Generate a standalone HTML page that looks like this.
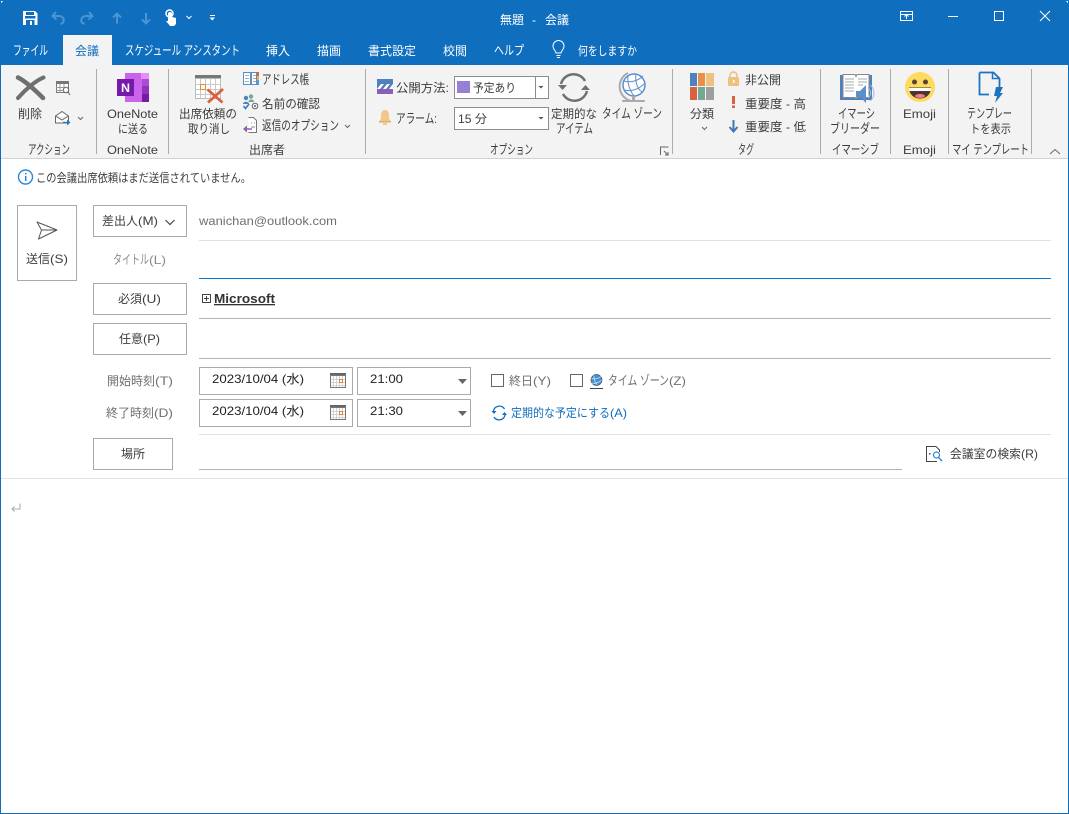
<!DOCTYPE html>
<html lang="ja"><head><meta charset="utf-8"><title>無題 - 会議</title>
<style>
html,body{margin:0;padding:0;background:#fff;width:1069px;height:814px;overflow:hidden}
svg{display:block}
text{font-family:"Liberation Sans","Noto Sans CJK JP",sans-serif;font-size:12px;fill:#3c3c3c;white-space:pre}
.w{fill:#fff}
.g{fill:#6f6f6f}
.k{font-size:13px}
.d{fill:#222}
</style></head><body>
<svg width="1069" height="814" viewBox="0 0 1069 814" xmlns="http://www.w3.org/2000/svg">
<!-- window -->
<rect x="0.5" y="0.5" width="1068" height="813" fill="#fff" stroke="#106ebe"/>
<path d="M0 8Q0 0 8 0H1061Q1069 0 1069 8V65H0Z" fill="#106ebe"/>
<rect x="1" y="65" width="1067" height="93" fill="#f3f3f3"/>
<rect x="1" y="158" width="1067" height="1" fill="#d2d2d2"/>
<rect x="63" y="35" width="49" height="30" fill="#f3f3f3"/>

<!-- QAT -->
<path d="M23 11h12l2.500 2.500V25H23Z" fill="#fff"/><rect x="25" y="16" width="10.500" height="2.500" fill="#106ebe"/><rect x="26" y="12" width="8" height="3" fill="#106ebe"/><rect x="26" y="20" width="8.500" height="5" fill="#106ebe"/><rect x="30" y="21" width="2" height="4" fill="#fff"/>
<g fill="none" stroke="#4d95d2" stroke-width="2">
<path d="M56 12l-3.500 4 4 3.500M53 16h6c5.500 0 6.500 7 1.500 8"/>
<path d="M89 12l3.500 4-4 3.500M92 16h-6c-5.500 0-6.500 7-1.500 8"/>
<path d="M117 23.500V13.500M113 17.500l4-4 4 4"/>
<path d="M146 13v10M142 19.500l4 4 4-4"/>
</g>
<path d="M168 21v-8a2.500 2.500 0 0 1 4 0v4l4 1v6l-2 2h-4l-4-5Z" fill="#fff"/><circle cx="169.500" cy="13.500" r="3.500" fill="none" stroke="#fff" stroke-width="1.500"/>
<path d="M186.500 16l2.500 2.500 2.500-2.500M210 15.500h5" fill="none" stroke="#fff"/>
<path d="M209.500 17.500h5.500l-2.750 3Z" fill="#fff"/>

<!-- window buttons -->
<g fill="none" stroke="#fff">
<rect x="900.500" y="11.500" width="12" height="9"/><path d="M900 14.500h13M906.500 19v-4M904.500 16.500l2-2 2 2"/>
<path d="M948 16.500h10"/>
<rect x="994.500" y="11.500" width="9" height="9"/>
<path d="M1040 11l10 10M1050 11l-10 10"/>
</g>

<text class="w" x="500" y="24" textLength="24" lengthAdjust="spacingAndGlyphs">無題</text>
<text class="w" x="532" y="24">-</text>
<text class="w" x="545" y="24" textLength="24" lengthAdjust="spacingAndGlyphs">会議</text>
<!-- tabs -->
<text class="w k" x="13" y="55" textLength="35" lengthAdjust="spacingAndGlyphs">ファイル</text>
<text x="75" y="55" textLength="24" lengthAdjust="spacingAndGlyphs" style="fill:#106ebe">会議</text>
<text class="w k" x="125" y="55" textLength="115" lengthAdjust="spacingAndGlyphs">スケジュール アシスタント</text>
<text class="w" x="266" y="55" textLength="24" lengthAdjust="spacingAndGlyphs">挿入</text>
<text class="w" x="317" y="55" textLength="24" lengthAdjust="spacingAndGlyphs">描画</text>
<text class="w" x="368" y="55" textLength="48" lengthAdjust="spacingAndGlyphs">書式設定</text>
<text class="w" x="443" y="55" textLength="24" lengthAdjust="spacingAndGlyphs">校閲</text>
<text class="w k" x="494" y="55" textLength="30" lengthAdjust="spacingAndGlyphs">ヘルプ</text>
<path d="M556 53c0-2-3-3.500-3-7a5.500 5.500 0 0 1 11 0c0 3.500-3 5-3 7ZM556.500 55.500h4M557 57.500h3" fill="none" stroke="#fff"/>
<text class="w" x="578" y="55" textLength="59" lengthAdjust="spacingAndGlyphs">何をしますか</text>

<!-- ribbon separators -->
<g fill="#ababab"><rect x="96" y="69" width="1" height="85"/><rect x="168" y="69" width="1" height="85"/><rect x="365" y="69" width="1" height="85"/><rect x="672" y="69" width="1" height="85"/><rect x="820" y="69" width="1" height="85"/><rect x="890" y="69" width="1" height="85"/><rect x="948" y="69" width="1" height="85"/><rect x="1031" y="69" width="1" height="85"/></g>

<!-- delete group -->
<g fill="none" stroke="#6f6f6f" stroke-linecap="round"><path d="M18 77.500C25 81 36 91 43 98" stroke-width="4.500"/><path d="M43.500 77.500C35 81 25 90 18 98" stroke-width="4"/></g>
<rect x="56.500" y="81.500" width="12" height="11" fill="#fff" stroke="#777"/><rect x="56" y="81" width="13" height="3" fill="#777"/><path d="M56 87.500h9M56 90.500h7M60 84v9M64 84v4" stroke="#999" fill="none"/>
<circle cx="66" cy="90" r="2.700" fill="#fff" stroke="#666"/><path d="M68 92l2 3" stroke="#666" fill="none"/>
<path d="M55.500 116l6.500-4.500 6.500 4.500v7h-13Z M55.500 116l6.500 4 6.500-4" fill="#fff" stroke="#666"/>
<path d="M63 122.500h6" stroke="#2b79c2" stroke-width="1.500" fill="none"/><path d="M67 119.500l3.500 3-3.500 3Z" fill="#2b79c2"/>
<path d="M78 117l2.500 2.500 2.500-2.500" fill="none" stroke="#666"/>
<text x="18" y="118" textLength="24" lengthAdjust="spacingAndGlyphs">削除</text>
<text class="k" x="28" y="154" textLength="42" lengthAdjust="spacingAndGlyphs">アクション</text>

<!-- onenote -->
<rect x="125" y="73" width="24" height="29" fill="#ca64ea"/><path d="M141 73h8v6h-8Z" fill="#e38ff5"/><rect x="142" y="79" width="7" height="7" fill="#ae4bd5"/><rect x="142" y="86" width="7" height="8" fill="#9332bf"/><rect x="142" y="94" width="7" height="8" fill="#7719aa"/>
<rect x="117" y="79" width="17" height="17" fill="#7719aa"/>
<text x="121" y="92" style="font-size:12px;font-weight:700;fill:#fff" textLength="9" lengthAdjust="spacingAndGlyphs">N</text>
<text x="107" y="118" textLength="51" lengthAdjust="spacingAndGlyphs">OneNote</text>
<text x="118" y="133" textLength="30" lengthAdjust="spacingAndGlyphs">に送る</text>
<text x="107" y="154" textLength="51" lengthAdjust="spacingAndGlyphs">OneNote</text>

<!-- attendees -->
<rect x="195" y="75" width="26" height="4" fill="#777"/>
<rect x="195.500" y="78.500" width="25" height="20" fill="#fff" stroke="#bbb"/>
<path d="M195 84.500h26M195 89.500h26M195 94.500h26M200.500 79v20M205.500 79v20M210.500 79v20M215.500 79v20" stroke="#c8c8c8" fill="none"/>
<rect x="200.500" y="84.500" width="5" height="5" fill="#fff" stroke="#e28a3d"/>
<path d="M207.500 89.500L222.500 102.500M223 89L208 102.500" stroke="#d9613f" stroke-width="2.800" fill="none"/>
<text x="179" y="118" textLength="58" lengthAdjust="spacingAndGlyphs">出席依頼の</text>
<text x="188" y="133" textLength="42" lengthAdjust="spacingAndGlyphs">取り消し</text>
<text x="249" y="154" textLength="36" lengthAdjust="spacingAndGlyphs">出席者</text>
<!-- address book -->
<path d="M243.500 72.500h7v12h-7ZM251.500 72.500h5v12h-5Z" fill="#fff" stroke="#5b8fc9"/>
<path d="M245 75.500h4M245 78.500h4M245 81.500h4M253 75.500h3M253 78.500h3M253 81.500h3" stroke="#aaa" fill="none"/>
<rect x="257" y="72" width="2" height="4" fill="#d9613f"/><rect x="257" y="76" width="2" height="4" fill="#e8b04a"/><rect x="257" y="80" width="2" height="5" fill="#5b9bd5"/>
<!-- check names -->
<circle cx="246" cy="98" r="2.200" fill="#4f81bd"/><path d="M243 104c0-3 6-3 6 0Z" fill="#4f81bd"/>
<circle cx="251" cy="96.500" r="2.200" fill="#72a993"/><path d="M248.500 102c0-3.500 5.500-3.500 5.500 0Z" fill="#72a993"/>
<path d="M243.500 106l2 2.500 3.500-4.500" stroke="#2b79c2" stroke-width="1.500" fill="none"/>
<circle cx="255" cy="106" r="2.800" fill="none" stroke="#666"/><circle cx="255" cy="106" r="1" fill="#666"/>
<!-- reply options -->
<path d="M248.500 117.500h5l3 3v12h-8" fill="#fff" stroke="#777"/><path d="M251 123h1M254 123h1M251 127h4" stroke="#888" fill="none"/>
<path d="M244 129h8" stroke="#8f5fb5" stroke-width="1.500" fill="none"/><path d="M247 125.500l-4 3.500 4 3.500Z" fill="#8f5fb5"/>
<text class="k" x="262" y="84" textLength="47" lengthAdjust="spacingAndGlyphs">アドレス帳</text>
<text x="262" y="108" textLength="58" lengthAdjust="spacingAndGlyphs">名前の確認</text>
<text class="k" x="262" y="130" textLength="77" lengthAdjust="spacingAndGlyphs">返信のオプション</text>
<path d="M345 125l2.500 2.500 2.500-2.500" fill="none" stroke="#666"/>

<!-- options -->
<rect x="377" y="79" width="16" height="10" fill="#4f81bd"/><path d="M377 89l4-5h3l-4 5ZM383 89l4-5h3l-4 5ZM389 89l4-5v5Z" fill="#fff"/><rect x="377" y="89" width="16" height="5" fill="#8b5fb5"/>
<path d="M379 121c2-1 2-3 2-5 0-5 2-6 4-6s4 1 4 6c0 2 0 4 2 5Z" fill="#f0c88a"/><rect x="379" y="121" width="12" height="1.500" fill="#e8a860"/><rect x="383" y="123" width="4" height="2" fill="#f0c88a"/>
<text x="396" y="92" textLength="53" lengthAdjust="spacingAndGlyphs">公開方法:</text>
<text class="k" x="396" y="123" textLength="41" lengthAdjust="spacingAndGlyphs">アラーム:</text>
<rect x="454.500" y="76.500" width="94" height="22" fill="#fff" stroke="#8c8c8c"/><path d="M535.500 77v21" stroke="#8c8c8c"/>
<rect x="457" y="81" width="13" height="12" fill="#997fd4"/>
<text x="473" y="92" textLength="43" lengthAdjust="spacingAndGlyphs">予定あり</text>
<path d="M538.500 86h5l-2.500 2.500Z" fill="#555"/>
<rect x="454.500" y="107.500" width="94" height="22" fill="#fff" stroke="#8c8c8c"/>
<text x="458" y="123" textLength="29" lengthAdjust="spacingAndGlyphs">15 分</text>
<path d="M538.500 117h5l-2.500 2.500Z" fill="#555"/>
<!-- recurrence -->
<g fill="none" stroke="#707070" stroke-width="2.500"><path d="M561 84a13 13 0 0 1 24-3"/><path d="M587 91a13 13 0 0 1-24 3"/></g>
<path d="M558 85h9l-4.500 5ZM581 90h9l-4.500-5Z" fill="#707070"/>
<text x="551" y="118" textLength="46" lengthAdjust="spacingAndGlyphs">定期的な</text>
<text class="k" x="556" y="133" textLength="37" lengthAdjust="spacingAndGlyphs">アイテム</text>
<!-- globe -->
<path d="M628 73a15 15 0 0 0 3 28" fill="none" stroke="#aaa" stroke-width="2"/>
<rect x="622" y="100" width="23" height="2" rx="1" fill="#aaa"/><rect x="632" y="97" width="3" height="4" fill="#aaa"/>
<circle cx="634" cy="85" r="11" fill="#fff" stroke="#5b8fc9" stroke-width="1.500"/>
<path d="M624 81c6 2 14 0 19-5M625 90c6 2 14-1 19-6M628 76c-1 7 2 15 6 20M636 74c-1 7 1 15 6 18" fill="none" stroke="#5b8fc9"/>
<text class="k" x="602" y="118" textLength="60" lengthAdjust="spacingAndGlyphs">タイム ゾーン</text>
<text class="k" x="490" y="154" textLength="43" lengthAdjust="spacingAndGlyphs">オプション</text>
<path d="M660.500 155v-8h8M664 151l4 4M668 152v3h-3" fill="none" stroke="#666"/>

<!-- tags -->
<rect x="690" y="73" width="7" height="13" fill="#4f81bd"/><rect x="698" y="73" width="7" height="13" fill="#e8904a"/><rect x="706" y="73" width="8" height="13" fill="#edc27e"/>
<rect x="690" y="87" width="7" height="13" fill="#d9613f"/><rect x="698" y="87" width="7" height="13" fill="#72a993"/><rect x="706" y="87" width="8" height="13" fill="#9e9e9e"/>
<text x="690" y="118" textLength="24" lengthAdjust="spacingAndGlyphs">分類</text>
<path d="M702 127l2.500 2.500 2.500-2.500" fill="none" stroke="#666"/>
<text class="k" x="738" y="154" textLength="16" lengthAdjust="spacingAndGlyphs">タグ</text>
<path d="M730 78v-2.500a3.500 3.500 0 0 1 7 0V78" fill="none" stroke="#e8c080" stroke-width="1.500"/><rect x="728" y="77" width="11" height="9" rx="1" fill="#edc27e"/><rect x="733" y="80" width="1.500" height="3" fill="#fff"/>
<rect x="732" y="96" width="3" height="8" fill="#d9613f"/><rect x="732" y="105.500" width="3" height="2.500" fill="#d9613f"/>
<path d="M733.500 120v11M729.500 127l4 4.500 4-4.500" fill="none" stroke="#3e79b5" stroke-width="2"/>
<text x="745" y="84" textLength="36" lengthAdjust="spacingAndGlyphs">非公開</text>
<text x="745" y="108" textLength="61" lengthAdjust="spacingAndGlyphs">重要度 - 高</text>
<text x="745" y="131" textLength="61" lengthAdjust="spacingAndGlyphs">重要度 - 低</text>

<!-- immersive -->
<rect x="840" y="75" width="32" height="25" fill="#4f81bd"/>
<path d="M843 74.500h12l1 2 1-2h12v23h-12l-1 1-1-1h-12Z" fill="#fff" stroke="#888"/>
<path d="M845 79h9M845 82h9M845 85h9M845 88h9M845 91h9M858 79h9M858 82h9M858 85h5" stroke="#aaa" fill="none"/>
<path d="M856 91h4l6-6v18l-6-6h-4Z" fill="#5b8fc9"/>
<path d="M868 88a6 6 0 0 1 0 10M870 85a10 10 0 0 1 0 16" fill="none" stroke="#9dbde0"/>
<text class="k" x="838" y="118" textLength="37" lengthAdjust="spacingAndGlyphs">イマーシ</text>
<text class="k" x="830" y="133" textLength="50" lengthAdjust="spacingAndGlyphs">ブリーダー</text>
<text class="k" x="832" y="154" textLength="47" lengthAdjust="spacingAndGlyphs">イマーシブ</text>

<!-- emoji -->
<circle cx="920" cy="87" r="15" fill="#fcdb5f"/>
<circle cx="914.500" cy="82" r="2.500" fill="#5d4037"/><circle cx="925.500" cy="82" r="2.500" fill="#5d4037"/>
<path d="M909 87.500h22c0 7-5 11-11 11s-11-4-11-11Z" fill="#4e342e"/><rect x="909" y="88" width="22" height="3" fill="#fff"/><ellipse cx="920" cy="96" rx="5" ry="2" fill="#ee7c8b"/>
<text x="903" y="118" textLength="33" lengthAdjust="spacingAndGlyphs">Emoji</text>
<text x="903" y="154" textLength="33" lengthAdjust="spacingAndGlyphs">Emoji</text>

<!-- template -->
<path d="M979.500 72.500h14l6 6v11M989 94.500h-9.500v-22" fill="none" stroke="#1c74c0" stroke-width="1.800"/><path d="M992.500 72.500v6h6" fill="none" stroke="#1c74c0" stroke-width="1.500"/>
<path d="M996 87h7l-3 6h3l-8 10 2-7h-3Z" fill="#1c74c0"/>
<text class="k" x="967" y="118" textLength="45" lengthAdjust="spacingAndGlyphs">テンプレー</text>
<text x="970" y="133" textLength="41" lengthAdjust="spacingAndGlyphs">トを表示</text>
<text class="k" x="952" y="154" textLength="77" lengthAdjust="spacingAndGlyphs">マイ テンプレート</text>
<path d="M1050 154l5-4.500 5 4.500" fill="none" stroke="#666"/>

<!-- info -->
<circle cx="25.500" cy="177" r="7" fill="#fff" stroke="#2b88d8" stroke-width="1.400"/><rect x="25" y="176" width="1.500" height="5" fill="#2b88d8"/><rect x="25" y="173" width="1.500" height="1.500" fill="#2b88d8"/>
<text x="36" y="182" textLength="215" lengthAdjust="spacingAndGlyphs">この会議出席依頼はまだ送信されていません。</text>

<!-- send -->
<rect x="17.500" y="205.500" width="59" height="75" fill="#fff" stroke="#ababab"/>
<path d="M37 222l20 8-18.500 9 3-9ZM42 230h15" fill="none" stroke="#555" stroke-linejoin="round"/>
<text x="26" y="263" textLength="24" lengthAdjust="spacingAndGlyphs">送信</text><text x="50" y="263" textLength="18" lengthAdjust="spacingAndGlyphs">(S)</text>

<!-- form buttons -->
<g fill="#fff" stroke="#ababab">
<rect x="93.500" y="205.500" width="93" height="31"/>
<rect x="93.500" y="283.500" width="93" height="31"/>
<rect x="93.500" y="323.500" width="93" height="31"/>
<rect x="93.500" y="438.500" width="79" height="31"/>
</g>
<text x="102" y="225" textLength="36" lengthAdjust="spacingAndGlyphs">差出人</text><text x="138" y="225" textLength="20" lengthAdjust="spacingAndGlyphs">(M)</text>
<path d="M165.500 220l4.500 4.500 4.500-4.500" fill="none" stroke="#444" stroke-width="1.200"/>
<text x="199" y="225" textLength="138" lengthAdjust="spacingAndGlyphs" class="g">wanichan@outlook.com</text>
<rect x="199" y="240" width="852" height="1" fill="#e1e1e1"/>
<text class="k" x="113" y="264" textLength="36" lengthAdjust="spacingAndGlyphs" style="fill:#8a8a8a">タイトル</text><text x="149" y="264" textLength="17" lengthAdjust="spacingAndGlyphs" style="fill:#8a8a8a">(L)</text>
<rect x="199" y="278" width="852" height="1" fill="#0078d4"/>
<text x="118" y="303" textLength="24" lengthAdjust="spacingAndGlyphs">必須</text><text x="142" y="303" textLength="19" lengthAdjust="spacingAndGlyphs">(U)</text>
<rect x="202.500" y="294.500" width="8" height="8" fill="#fff" stroke="#444"/><path d="M204 298.500h5M206.500 296v5" stroke="#444" fill="none"/>
<text x="214" y="303" textLength="61" lengthAdjust="spacingAndGlyphs" style="font-weight:700;fill:#333;font-size:13px;text-decoration:underline">Microsoft</text>
<rect x="199" y="318" width="852" height="1" fill="#b4b4b4"/>
<text x="119" y="343" textLength="24" lengthAdjust="spacingAndGlyphs">任意</text><text x="143" y="343" textLength="17" lengthAdjust="spacingAndGlyphs">(P)</text>
<rect x="199" y="358" width="852" height="1" fill="#b4b4b4"/>

<!-- dates -->
<text x="107" y="385" textLength="48" lengthAdjust="spacingAndGlyphs" class="g">開始時刻</text><text x="155" y="385" textLength="18" lengthAdjust="spacingAndGlyphs" class="g">(T)</text>
<text x="106" y="417" textLength="48" lengthAdjust="spacingAndGlyphs" class="g">終了時刻</text><text x="154" y="417" textLength="19" lengthAdjust="spacingAndGlyphs" class="g">(D)</text>
<g fill="#fff" stroke="#ababab">
<rect x="199.500" y="367.500" width="153" height="27"/>
<rect x="357.500" y="367.500" width="113" height="27"/>
<rect x="199.500" y="399.500" width="153" height="27"/>
<rect x="357.500" y="399.500" width="113" height="27"/>
</g>
<text class="d" x="212" y="383" textLength="92" lengthAdjust="spacingAndGlyphs">2023/10/04 (水)</text>
<text class="d" x="212" y="415" textLength="92" lengthAdjust="spacingAndGlyphs">2023/10/04 (水)</text>
<text class="d" x="370" y="383" textLength="33" lengthAdjust="spacingAndGlyphs">21:00</text>
<text class="d" x="370" y="415" textLength="33" lengthAdjust="spacingAndGlyphs">21:30</text>
<rect x="330" y="373" width="16" height="3" fill="#666"/><rect x="330.500" y="375.500" width="15" height="12" fill="#fff" stroke="#777"/>
<path d="M333.500 376v11M336.500 376v11M339.500 376v11M342.500 376v11M331 379.500h14M331 382.500h14M331 385.500h14" stroke="#d4d4d4" fill="none"/>
<rect x="339.500" y="379.500" width="3" height="3" fill="#fff" stroke="#e28a3d"/>
<rect x="330" y="405" width="16" height="3" fill="#666"/><rect x="330.500" y="407.500" width="15" height="12" fill="#fff" stroke="#777"/>
<path d="M333.500 408v11M336.500 408v11M339.500 408v11M342.500 408v11M331 411.500h14M331 414.500h14M331 417.500h14" stroke="#d4d4d4" fill="none"/>
<rect x="339.500" y="411.500" width="3" height="3" fill="#fff" stroke="#e28a3d"/>
<path d="M458 379h9l-4.500 5ZM458 411h9l-4.500 5Z" fill="#666"/>

<rect x="491.500" y="374.500" width="12" height="12" fill="#fff" stroke="#666"/>
<text class="g" x="509" y="385" textLength="24" lengthAdjust="spacingAndGlyphs">終日</text><text class="g" x="533" y="385" textLength="18" lengthAdjust="spacingAndGlyphs">(Y)</text>
<rect x="570.500" y="374.500" width="12" height="12" fill="#fff" stroke="#666"/>
<circle cx="596.500" cy="380" r="5.500" fill="#3f8fd6" stroke="#555" stroke-width=".7"/><path d="M591.500 378.500c3 1 7 0 9.500-2M592 383c3 1 7-.5 9.500-3M594 375.500c0 3 1 7 3 9" fill="none" stroke="#cfe4f7" stroke-width=".8"/><path d="M590 388.500h13" stroke="#444"/>
<text class="g k" x="608" y="385" textLength="61" lengthAdjust="spacingAndGlyphs">タイム ゾーン</text><text class="g" x="669" y="385" textLength="17" lengthAdjust="spacingAndGlyphs">(Z)</text>
<g fill="none" stroke="#106ebe" stroke-width="1.300"><path d="M493.500 411a6 6 0 0 1 11-2"/><path d="M505 415a6 6 0 0 1-11 2"/></g>
<path d="M491.500 411h5l-2.500 3ZM502 415h5l-2.500-3Z" fill="#106ebe"/>
<text x="511" y="417" textLength="99" lengthAdjust="spacingAndGlyphs" style="fill:#106ebe">定期的な予定にする</text><text x="610" y="417" textLength="17" lengthAdjust="spacingAndGlyphs" style="fill:#106ebe">(A)</text>

<rect x="199" y="434" width="852" height="1" fill="#e1e1e1"/>
<text x="121" y="458" textLength="24" lengthAdjust="spacingAndGlyphs">場所</text>
<rect x="199" y="469" width="703" height="1" fill="#b4b4b4"/>
<path d="M937 461.500h-10.500v-15h9.500l3.500 3.500v2" fill="none" stroke="#444"/><rect x="929" y="453" width="1.500" height="1.500" fill="#444"/>
<circle cx="936.500" cy="455" r="3" fill="#fff" stroke="#2b88d8" stroke-width="1.200"/><path d="M938.500 457.500l3.500 3.500" stroke="#2b88d8" stroke-width="1.300"/>
<text x="950" y="458" textLength="71" lengthAdjust="spacingAndGlyphs">会議室の検索</text><text x="1021" y="458" textLength="17" lengthAdjust="spacingAndGlyphs">(R)</text>
<rect x="1" y="478" width="1067" height="1" fill="#e1e1e1"/>

<!-- paragraph mark -->
<path d="M20 503.500v5.500h-8M14.500 506.500l-2.500 2.500 2.500 2.500" fill="none" stroke="#aaa"/>
</svg>
</body></html>
